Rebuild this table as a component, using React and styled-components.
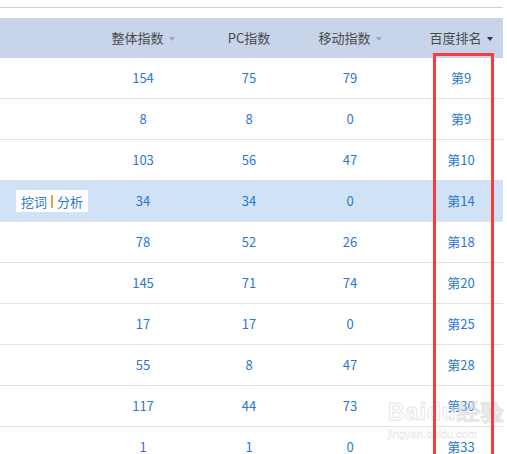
import React from "react";
import styled, { createGlobalStyle } from "styled-components";

const GlobalStyle = createGlobalStyle`
  html, body {
    margin: 0;
    padding: 0;
    background: #fff;
  }
  body {
    font-family: "Noto Sans CJK SC", "Noto Sans", "Liberation Sans", sans-serif;
    font-size: 13px;
  }
`;

const rows = [
  ["154", "75", "79", "第9"],
  ["8", "8", "0", "第9"],
  ["103", "56", "47", "第10"],
  ["34", "34", "0", "第14"],
  ["78", "52", "26", "第18"],
  ["145", "71", "74", "第20"],
  ["17", "17", "0", "第25"],
  ["55", "8", "47", "第28"],
  ["117", "44", "73", "第30"],
  ["1", "1", "0", "第33"],
];

const Page = styled.div`
  position: relative;
  width: 507px;
  height: 454px;
  overflow: hidden;
`;

const Frame = styled.div`
  width: 503px;
  overflow: hidden;
  padding-top: 7px;
`;

const TopRule = styled.div`
  height: 1px;
  background: #c9d0d6;
  margin-bottom: 10px;
`;

const Table = styled.div`
  width: 524px;
`;

const Row = styled.div`
  display: grid;
  grid-template-columns: 90px 106px 106px 96px 126px;
  align-items: center;
  height: 40px;
  background: ${(p) => (p.$head ? "#c8d4ea" : p.$active ? "#cfe2f6" : "#fff")};
  border-bottom: ${(p) => (p.$head ? "none" : "1px solid #e3e3e3")};
`;

const HeadCell = styled.div`
  text-align: center;
  color: #4a4a4a;
  font-size: 13px;
  line-height: 40px;
  white-space: nowrap;
`;

const Arrow = styled.span`
  display: inline-block;
  width: 0;
  height: 0;
  margin-left: 5px;
  vertical-align: middle;
  border-left: 3.5px solid transparent;
  border-right: 3.5px solid transparent;
  border-top: 4px solid ${(p) => (p.$dark ? "#333" : "#a0a4ab")};
`;

const Cell = styled.div`
  text-align: center;
  color: #2a78cf;
  font-size: 13px;
  line-height: 40px;
  white-space: nowrap;
`;

const ActionCell = styled.div`
  padding-left: 16px;
`;

const Actions = styled.span`
  display: inline-flex;
  align-items: center;
  height: 22px;
  padding: 0 5px;
  background: #fff;
  color: #2a78cf;
  font-size: 13px;
  gap: 4px;
`;

const Sep = styled.span`
  display: inline-block;
  width: 2px;
  height: 13px;
  background: #e8a046;
`;

const Marker = styled.div`
  position: absolute;
  left: 433px;
  top: 53px;
  width: 55px;
  height: 420px;
  border: 3px solid #f63c3c;
  pointer-events: none;
`;

const Watermark = styled.div`
  position: absolute;
  left: 388px;
  top: 401px;
  pointer-events: none;
  white-space: nowrap;
  font-family: "Liberation Sans", sans-serif;
  color: rgba(255, 255, 255, 0.5);
  -webkit-text-stroke: 1px rgba(190, 190, 190, 0.4);
  line-height: 1;
`;

const WmBig = styled.div`
  font-size: 23px;
  font-weight: bold;
  letter-spacing: 1px;
`;

const WmSmall = styled.div`
  font-size: 11px;
  margin-top: 5px;
  -webkit-text-stroke: 0.5px rgba(190, 190, 190, 0.4);
`;

export default function App() {
  return (
    <Page>
      <GlobalStyle />
      <Frame>
        <TopRule />
        <Table>
          <Row $head>
            <HeadCell />
            <HeadCell>
              整体指数
              <Arrow />
            </HeadCell>
            <HeadCell>PC指数</HeadCell>
            <HeadCell>
              移动指数
              <Arrow />
            </HeadCell>
            <HeadCell>
              百度排名
              <Arrow $dark />
            </HeadCell>
          </Row>
          {rows.map((r, i) => (
            <Row key={i} $active={i === 3}>
              {i === 3 ? (
                <ActionCell>
                  <Actions>
                    挖词
                    <Sep />
                    分析
                  </Actions>
                </ActionCell>
              ) : (
                <div />
              )}
              {r.map((v, j) => (
                <Cell key={j}>{v}</Cell>
              ))}
            </Row>
          ))}
        </Table>
      </Frame>
      <Watermark>
        <WmBig>Baidu经验</WmBig>
        <WmSmall>jingyan.baidu.com</WmSmall>
      </Watermark>
      <Marker />
    </Page>
  );
}
